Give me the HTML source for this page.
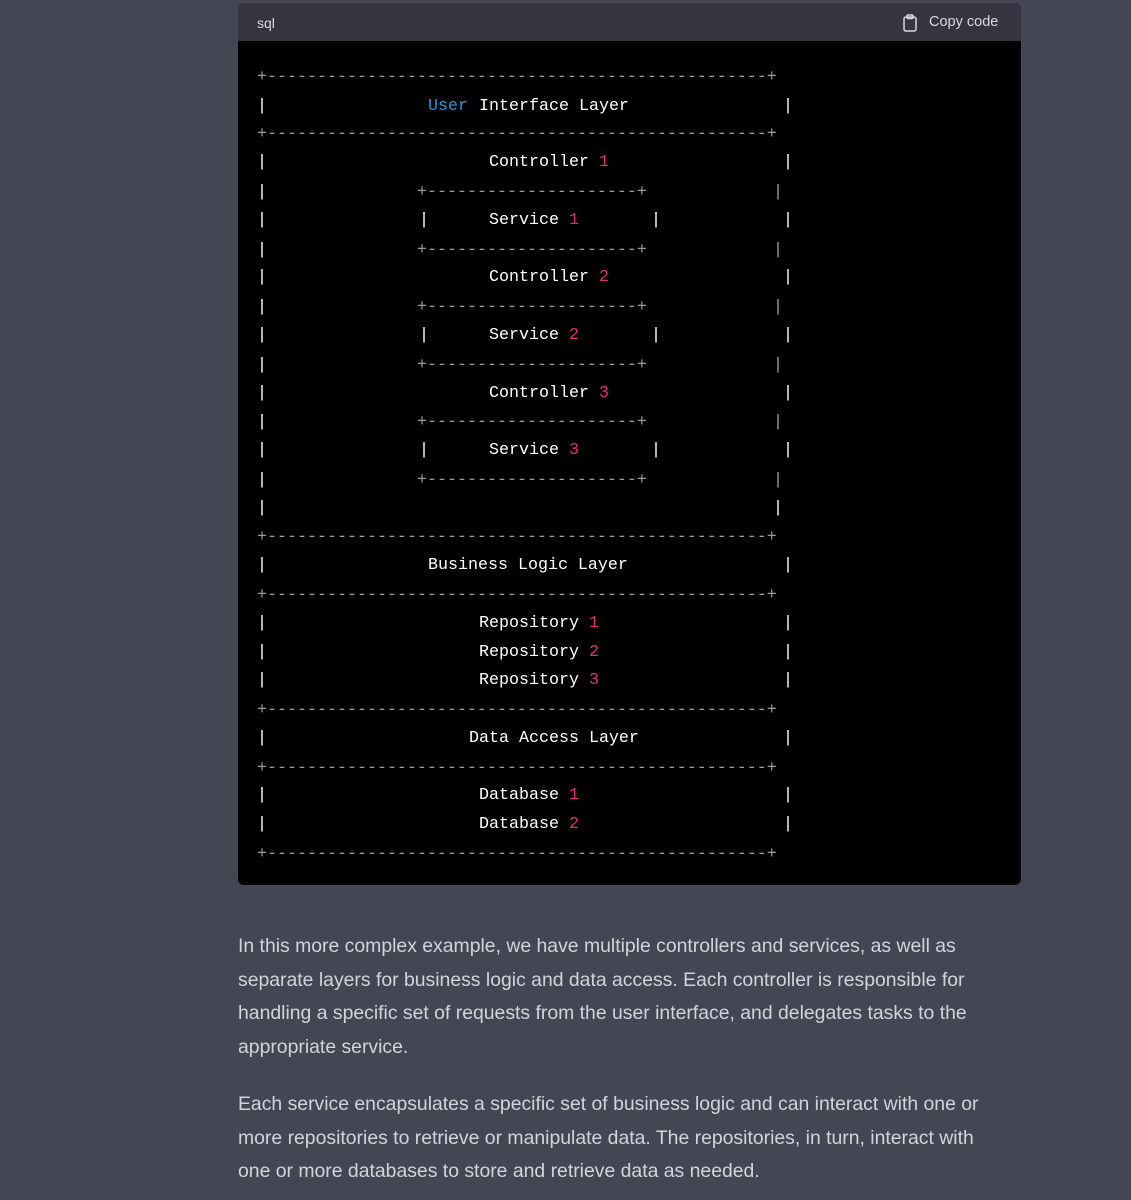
<!DOCTYPE html>
<html><head><meta charset="utf-8"><style>
html,body{margin:0;padding:0;background:#444654;width:1131px;height:1200px;overflow:hidden;}
.box{position:absolute;left:238px;top:3px;width:783px;height:882px;background:#000;border-radius:6px;overflow:hidden;}
.hd{position:absolute;left:0;top:0;width:783px;height:38px;background:#343541;font-family:"Liberation Sans",sans-serif;font-size:14px;color:#d9d9e3;}
.hd .l{position:absolute;left:19px;top:12px;}
.hd .r{position:absolute;left:691px;top:11px;font-size:14.5px;}
.c{position:absolute;font-family:"Liberation Mono",monospace;font-size:16.67px;line-height:20px;color:#fff;white-space:pre;}
.g{color:#9a9a9a}.b{color:#2e95d3}.p{color:#df3079}
.t{position:absolute;left:238px;font-family:"Liberation Sans",sans-serif;font-size:19.4px;color:#d1d5db;white-space:nowrap;}
</style></head><body>
<div class="box">
<div class="hd"><span class="l">sql</span>
<svg style="position:absolute;left:664px;top:11px" width="16" height="18" viewBox="0 0 16 18" fill="none" stroke="#d9d9e3" stroke-width="1.5"><rect x="2" y="3" width="12" height="14" rx="2"/><rect x="5" y="1" width="6" height="3.5" rx="1"/></svg>
<span class="r">Copy code</span></div>
</div>
<div id="code"></div>
<script>
var L=[
[75,[[257,'+--------------------------------------------------+','g']]],
[104,[[257,'|'],[428,'User','b'],[479,'Interface Layer'],[783,'|']]],
[132,[[257,'+--------------------------------------------------+','g']]],
[160,[[257,'|'],[489,'Controller'],[599,'1','p'],[783,'|']]],
[190,[[257,'|'],[417,'+---------------------+','g'],[773,'|','g']]],
[218,[[257,'|'],[419,'|'],[489,'Service'],[569,'1','p'],[651,'|'],[783,'|']]],
[248,[[257,'|'],[417,'+---------------------+','g'],[773,'|','g']]],
[275,[[257,'|'],[489,'Controller'],[599,'2','p'],[783,'|']]],
[305,[[257,'|'],[417,'+---------------------+','g'],[773,'|','g']]],
[333,[[257,'|'],[419,'|'],[489,'Service'],[569,'2','p'],[651,'|'],[783,'|']]],
[363,[[257,'|'],[417,'+---------------------+','g'],[773,'|','g']]],
[391,[[257,'|'],[489,'Controller'],[599,'3','p'],[783,'|']]],
[420,[[257,'|'],[417,'+---------------------+','g'],[773,'|','g']]],
[448,[[257,'|'],[419,'|'],[489,'Service'],[569,'3','p'],[651,'|'],[783,'|']]],
[478,[[257,'|'],[417,'+---------------------+','g'],[773,'|','g']]],
[506,[[257,'|'],[773,'|']]],
[535,[[257,'+--------------------------------------------------+','g']]],
[563,[[257,'|'],[428,'Business Logic Layer'],[783,'|']]],
[593,[[257,'+--------------------------------------------------+','g']]],
[621,[[257,'|'],[479,'Repository'],[589,'1','p'],[783,'|']]],
[650,[[257,'|'],[479,'Repository'],[589,'2','p'],[783,'|']]],
[678,[[257,'|'],[479,'Repository'],[589,'3','p'],[783,'|']]],
[708,[[257,'+--------------------------------------------------+','g']]],
[736,[[257,'|'],[469,'Data Access Layer'],[783,'|']]],
[766,[[257,'+--------------------------------------------------+','g']]],
[793,[[257,'|'],[479,'Database'],[569,'1','p'],[783,'|']]],
[822,[[257,'|'],[479,'Database'],[569,'2','p'],[783,'|']]],
[852,[[257,'+--------------------------------------------------+','g']]]
];
var h='';
L.forEach(function(l){l[1].forEach(function(s){h+='<span class="c '+(s[2]||'')+'" style="left:'+s[0]+'px;top:'+(l[0]-7)+'px">'+s[1]+'</span>';});});
document.getElementById('code').innerHTML=h;
</script>
<div class="t" style="top:935px">In this more complex example, we have multiple controllers and services, as well as</div>
<div class="t" style="top:969px">separate layers for business logic and data access. Each controller is responsible for</div>
<div class="t" style="top:1002px">handling a specific set of requests from the user interface, and delegates tasks to the</div>
<div class="t" style="top:1036px">appropriate service.</div>
<div class="t" style="top:1093px">Each service encapsulates a specific set of business logic and can interact with one or</div>
<div class="t" style="top:1127px">more repositories to retrieve or manipulate data. The repositories, in turn, interact with</div>
<div class="t" style="top:1160px">one or more databases to store and retrieve data as needed.</div>
</body></html>
